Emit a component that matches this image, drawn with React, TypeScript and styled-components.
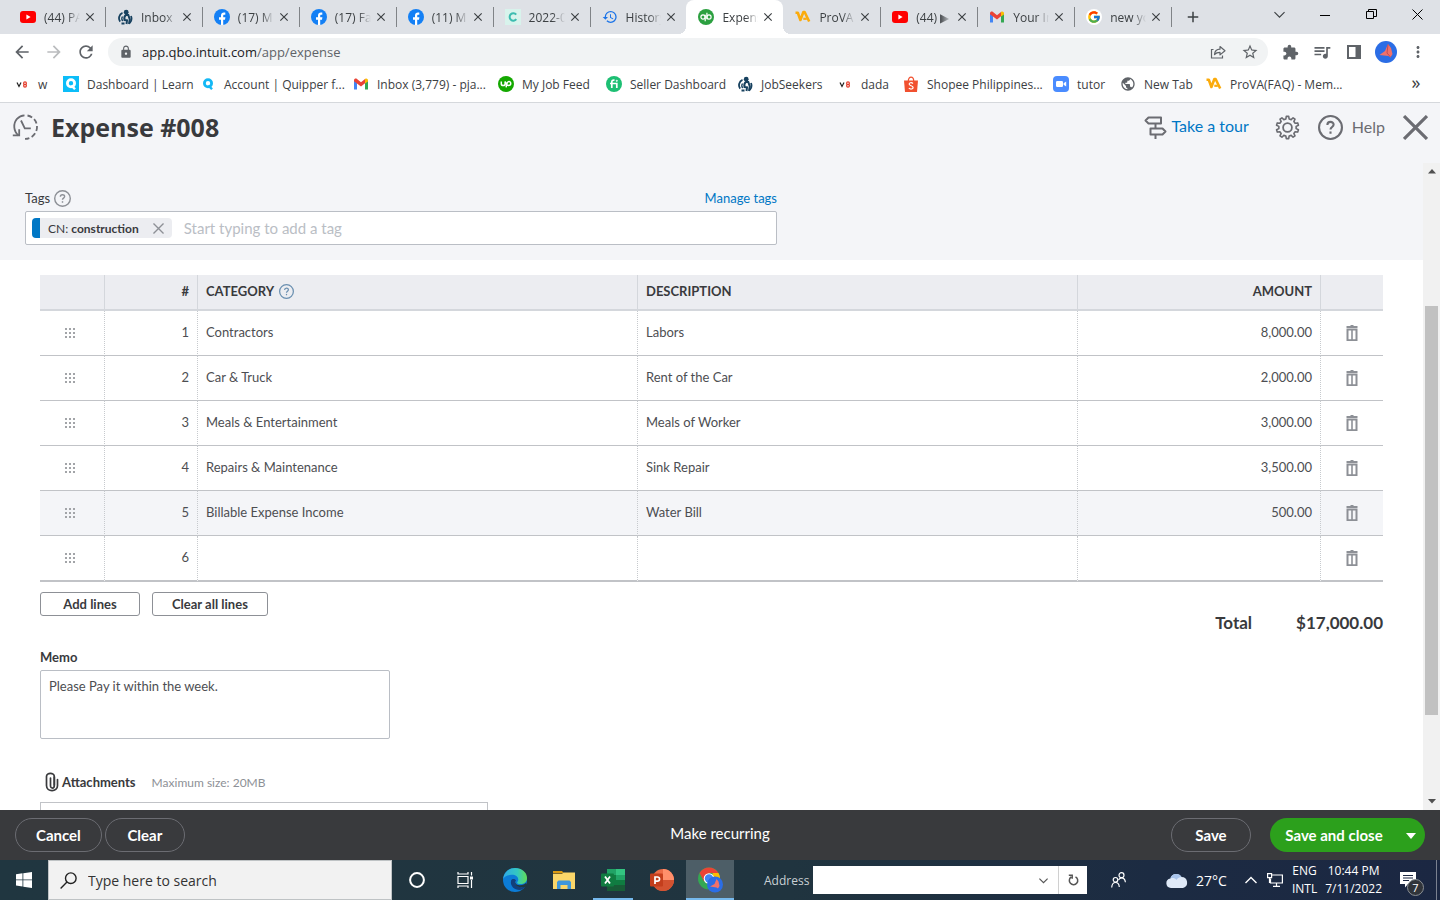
import React from "react";
import styled, { createGlobalStyle, css } from "styled-components";
import {
  MdAdd, MdArrowBack, MdArrowForward, MdClose, MdExtension, MdHistory, MdLock,
  MdMoreVert, MdPublic, MdQueueMusic, MdRefresh, MdStarBorder,
} from "react-icons/md";
import { FcGoogle } from "react-icons/fc";

const uiFont = `"Open Sans", "Noto Sans", sans-serif`;
const appFont = `Lato, "Open Sans", sans-serif`;

const GlobalStyle = createGlobalStyle`
  *, *::before, *::after { box-sizing: border-box; }
  body { margin: 0; background: #fff; }
  button, input, textarea { font: inherit; color: inherit; margin: 0; }
  button { border: 0; padding: 0; background: none; cursor: pointer; }
  a { color: inherit; text-decoration: none; }
  svg { display: block; flex: none; }
`;

const Screen = styled.div`
  display: flex;
  flex-direction: column;
  height: 100vh;
  overflow: hidden;
  font-family: ${uiFont};
  font-size: 12px;
  color: #3c4043;
`;

/* ---------- browser tabs ---------- */

const TabStrip = styled.div`
  display: flex;
  flex: none;
  height: 34px;
  padding-left: 8px;
  background: #dee1e6;
`;
const TabList = styled.div`
  display: flex;
  flex: 0 1 1163px;
  min-width: 0;
`;
const Tab = styled.div<{ $active?: boolean; $divider?: boolean }>`
  position: relative;
  display: flex;
  flex: 1 1 0;
  min-width: 0;
  align-items: center;
  gap: 8px;
  padding: 0 8px 0 12px;
  ${(p) => p.$divider && css`
    &::after {
      content: "";
      position: absolute;
      right: -1px;
      top: 7px;
      width: 1px;
      height: 20px;
      background: #808387;
    }
  `}
  ${(p) => p.$active && css`
    background: #fff;
    border-radius: 8px 8px 0 0;
    &::before, &::after {
      content: "";
      position: absolute;
      bottom: 0;
      width: 8px;
      height: 8px;
    }
    &::before { left: -8px; background: radial-gradient(circle at 0 0, transparent 8px, #fff 8px); }
    &::after { right: -8px; background: radial-gradient(circle at 100% 0, transparent 8px, #fff 8px); }
  `}
`;
const TabTitle = styled.span`
  flex: 1;
  min-width: 0;
  overflow: hidden;
  white-space: nowrap;
  mask-image: linear-gradient(90deg, #000 65%, transparent 100%);
`;
const TabClose = styled.button`
  flex: none;
  margin-left: -5px;
  color: #3c4043;
`;
const NewTab = styled.button`
  display: grid;
  place-items: center;
  width: 28px;
  margin-left: 8px;
  color: #3c4043;
`;
const WindowControls = styled.div`
  display: flex;
  margin-left: auto;
  height: 29px;
`;
const WindowButton = styled.button`
  display: grid;
  place-items: center;
  width: 46px;
`;

/* ---------- toolbar ---------- */

const Toolbar = styled.div`
  display: flex;
  flex: none;
  align-items: center;
  height: 36px;
  padding: 0 6px;
  color: #5f6368;
`;
const ToolButton = styled.button<{ $muted?: boolean }>`
  display: grid;
  place-items: center;
  width: 32px;
  height: 28px;
  color: ${(p) => (p.$muted ? "#babcbe" : "#5f6368")};
`;
const Omnibox = styled.div`
  display: flex;
  flex: 1;
  align-items: center;
  height: 28px;
  margin: 0 6px;
  padding: 0 2px 0 11px;
  border-radius: 14px;
  background: #f1f3f4;
`;
const Url = styled.span`
  flex: 1;
  margin-left: 9px;
  font-size: 13px;
  b { font-weight: 400; color: #202124; }
`;

/* ---------- bookmarks ---------- */

const BookmarkBar = styled.nav`
  display: flex;
  flex: none;
  align-items: center;
  height: 33px;
  padding: 0 12px 4px 14px;
  border-bottom: 1px solid #d5d8dc;
`;
const Bookmark = styled.a<{ $width: number }>`
  display: flex;
  align-items: center;
  flex: 0 1 ${(p) => p.$width}px;
  gap: 8px;
  white-space: nowrap;
`;
const MoreBookmarks = styled.button`
  margin-left: auto;
  padding-bottom: 4px;
  font-size: 18px;
  line-height: 20px;
  width: 24px;
`;

/* ---------- application ---------- */

const AppShell = styled.div`
  display: flex;
  flex: 1;
  flex-direction: column;
  min-height: 0;
  font-family: ${appFont};
  font-size: 13px;
  color: #393a3d;
`;
const AppHeader = styled.header`
  display: flex;
  flex: none;
  align-items: center;
  height: 60px;
  padding: 0 12px 12px;
  background: #f4f5f8;
  color: #6b6c72;
`;
const Title = styled.h1`
  flex: 1;
  margin: 0 0 0 12px;
  font-family: ${uiFont};
  font-size: 25px;
  line-height: 32px;
  font-weight: 700;
  color: #393a3d;
`;
const HeaderLink = styled.a`
  display: flex;
  align-items: center;
  gap: 4px;
  font-size: 16px;
  line-height: 20px;
  color: #0077c5;
`;
const SignIcon = styled.span`
  color: #6b6c72;
`;
const HeaderLabel = styled.span`
  padding-bottom: 2px;
`;
const HeaderButton = styled.button<{ $gap?: number }>`
  display: flex;
  align-items: center;
  gap: 9px;
  margin-left: ${(p) => p.$gap ?? 18}px;
  font-size: 16px;
  color: #6b6c72;
`;
const Body = styled.div`
  display: flex;
  flex: 1;
  min-height: 0;
`;
const Viewport = styled.main`
  flex: 1;
  min-width: 0;
  overflow: hidden;
`;
const Scrollbar = styled.div`
  display: flex;
  flex: none;
  flex-direction: column;
  align-items: center;
  justify-content: space-between;
  width: 17px;
  padding: 6px 2px;
  background: #f1f1f1;
`;
const Thumb = styled.div`
  width: 13px;
  flex: 0 1 409px;
  margin: 48px 0 0;
  background: #c1c1c1;
`;

const TagSection = styled.section`
  padding: 26px 25px 15px;
  background: #f4f5f8;
`;
const TagInner = styled.div`
  max-width: 752px;
`;
const TagHead = styled.div`
  display: flex;
  align-items: center;
  height: 18px;
  gap: 4px;
  margin-bottom: 4px;
  svg { color: #8d9096; }
  a { margin-left: auto; color: #0077c5; }
`;
const TagField = styled.div`
  display: flex;
  align-items: center;
  height: 34px;
  padding: 0 6px;
  border: 1px solid #babec5;
  border-radius: 2px;
  background: #fff;
  input {
    flex: 1;
    min-width: 0;
    margin-left: 12px;
    padding: 0;
    border: 0;
    outline: 0;
    font-size: 15px;
  }
  input::placeholder { color: #babec5; opacity: 1; }
`;
const Chip = styled.span`
  display: flex;
  align-items: center;
  height: 20px;
  padding: 0 8px;
  border-left: 8px solid #0077c5;
  border-radius: 4px;
  background: #ecedf1;
  font-size: 12px;
  white-space: pre;
  b { font-weight: 700; }
  button { margin-left: 14px; color: #8d9096; }
`;

const Lines = styled.section`
  padding: 15px 40px 0;
`;
const Table = styled.table`
  width: 100%;
  table-layout: fixed;
  border-collapse: separate;
  border-spacing: 0;
`;
const HeadCell = styled.th<{ $right?: boolean }>`
  height: 36px;
  padding: 0 8px 2px;
  border-right: 1px solid #d4d7dc;
  border-bottom: 2px solid #d4d7dc;
  background: #ecedf1;
  font-size: 13px;
  font-weight: 700;
  text-align: ${(p) => (p.$right ? "right" : "left")};
  &:last-child { border-right: 0; }
`;
const HeadLabel = styled.span`
  display: flex;
  align-items: center;
  gap: 5px;
  color: #393a3d;
  svg { color: #6a8fb0; }
`;
const Row = styled.tr<{ $hover?: boolean }>`
  background: ${(p) => (p.$hover ? "#f4f5f8" : "#fff")};
  &:last-child td { height: 46px; border-bottom: 2px solid #c1c3c7; }
`;
const Cell = styled.td<{ $right?: boolean; $icon?: boolean }>`
  height: 45px;
  padding: 0 8px ${(p) => (p.$icon ? 0 : 2)}px;
  border-right: 1px dotted #c7cace;
  border-bottom: 1px solid #c1c3c7;
  color: #4d4e52;
  text-align: ${(p) => (p.$right ? "right" : "left")};
  &:last-child { border-right: 0; }
`;
const HandleButton = styled.button`
  display: block;
  margin-left: 17px;
  color: #a2a4a8;
`;
const TrashButton = styled.button`
  display: block;
  margin: 0 auto;
  color: #8d9096;
`;
const Summary = styled.div`
  display: flex;
  align-items: flex-start;
  gap: 12px;
  padding-top: 10px;
`;
const LineButton = styled.button`
  height: 24px;
  padding: 0 19px;
  border: 1px solid #8d9096;
  border-radius: 3px;
  font-weight: 700;
  min-width: 100px;
`;
const Total = styled.p`
  display: flex;
  gap: 44px;
  margin: 19px 0 0 auto;
  font-size: 17px;
  line-height: 24px;
  font-weight: 700;
`;
const MemoLabel = styled.label`
  display: block;
  margin-top: 14px;
  line-height: 16px;
  font-weight: 700;
`;
const Memo = styled.textarea`
  display: block;
  width: 350px;
  height: 69px;
  margin-top: 5px;
  padding: 6px 8px;
  border: 1px solid #babec5;
  border-radius: 2px;
  color: #4d4e52;
  line-height: 18px;
  resize: none;
  outline: 0;
`;
const Attachments = styled.div`
  display: flex;
  align-items: center;
  height: 20px;
  margin-top: 33px;
  padding-left: 5px;
  b { margin: 0 16px 0 3px; }
  span { font-size: 12px; color: #8d9096; }
`;
const DropZone = styled.div`
  max-width: 448px;
  height: 80px;
  margin-top: 10px;
  border: 1px solid #c1c3c7;
`;

const Footer = styled.footer`
  display: grid;
  grid-template-columns: 1fr auto 1fr;
  flex: none;
  align-items: center;
  height: 50px;
  padding: 0 15px;
  background: #393a3d;
  color: #fff;
  font-size: 15px;
`;
const RecurringButton = styled.button`
  padding-bottom: 4px;
`;
const FooterGroup = styled.div<{ $gap: number; $end?: boolean }>`
  display: flex;
  gap: ${(p) => p.$gap}px;
  justify-content: ${(p) => (p.$end ? "flex-end" : "flex-start")};
`;
const Pill = styled.button`
  height: 34px;
  min-width: 80px;
  padding: 0 20px;
  border: 1px solid #6b6c72;
  border-radius: 17px;
  font-weight: 700;
`;
const SaveClose = styled.div`
  display: flex;
  width: 155px;
  height: 34px;
  border-radius: 17px;
  overflow: hidden;
  background: #2ca01c;
  font-weight: 700;
  button:first-child { flex: 1; padding-left: 1px; }
  button:last-child { display: grid; place-items: center; width: 28px; padding-top: 2px; }
`;

/* ---------- taskbar ---------- */

const Taskbar = styled.div`
  display: flex;
  flex: none;
  height: 40px;
  background: linear-gradient(90deg, #203640, #20343f 55%, #1c2b42 80%, #1b2742);
  color: #fff;
`;
const StartButton = styled.button`
  display: grid;
  place-items: center;
  width: 48px;
`;
const Search = styled.label`
  display: flex;
  align-items: center;
  gap: 11px;
  flex: 0 1 344px;
  padding: 0 11px;
  border: 1px solid #bfc3c5;
  background: #f2f2f2;
  color: #222;
  input {
    flex: 1;
    min-width: 0;
    padding: 0;
    border: 0;
    outline: 0;
    background: none;
    font-size: 14px;
  }
  input::placeholder { color: #333; opacity: 1; }
`;
const TaskButton = styled.button<{ $active?: boolean; $running?: boolean }>`
  display: grid;
  place-items: center;
  width: 49px;
  ${(p) => p.$active && css`width: 48px; background: #4d5e67; box-shadow: inset 0 -2px #76b9ed;`}
  ${(p) => p.$running && css`
    background: linear-gradient(#76b9ed, #76b9ed) center bottom / 40px 2px no-repeat;
  `}
`;
const AddressLabel = styled.label`
  display: flex;
  align-items: center;
  gap: 4px;
  margin-left: 30px;
  color: #c9d0d4;
`;
const AddressBox = styled.span`
  display: flex;
  align-items: center;
  width: 274px;
  height: 28px;
  background: #fff;
  color: #555;
  input { flex: 1; min-width: 0; border: 0; outline: 0; background: none; }
  button { display: grid; place-items: center; width: 29px; height: 28px; }
  button:last-child { border-left: 1px solid #d0d0d0; }
`;
const Tray = styled.div`
  display: flex;
  align-items: center;
  margin-left: auto;
  padding-right: 3px;
`;
const TrayButton = styled.button<{ $left: number }>`
  position: relative;
  display: flex;
  align-items: center;
  gap: 8px;
  margin-left: ${(p) => p.$left}px;
  font-size: 14px;
`;
const TrayText = styled.span<{ $left: number }>`
  margin-left: ${(p) => p.$left}px;
  font-size: 12px;
  line-height: 18px;
  text-align: center;
`;
const Count = styled.span`
  position: absolute;
  left: 7px;
  top: 7px;
  width: 17px;
  height: 17px;
  border: 1px solid #8a8f94;
  border-radius: 50%;
  background: #30343a;
  font-size: 11px;
  line-height: 15px;
  text-align: center;
`;
const DesktopEdge = styled.span`
  width: 1px;
  height: 40px;
  margin-left: 20px;
  background: #7a8190;
`;

/* ---------- brand icons ---------- */

const YouTube = () => (
  <svg width="16" height="16" viewBox="0 0 16 16"><rect y="2" width="16" height="12" rx="3" fill="#f00" /><path d="M6.400 5.500v5L10.600 8z" fill="#fff" /></svg>
);
const Facebook = () => (
  <svg width="16" height="16" viewBox="0 0 16 16"><circle cx="8" cy="8" r="8" fill="#1480f5" /><path d="M7 16v-5.300H5V8.300h2V6.600c0-2 1.200-3 2.900-3 .8 0 1.400.1 1.400.1v2h-.9c-1 0-1.200.6-1.200 1.200v1.400h2.200l-.4 2.400H9.200V16z" fill="#fff" /></svg>
);
const Jobs = () => (
  <svg width="16" height="16" viewBox="0 0 16 16" fill="none" stroke="#17415f">
    <circle cx="9.200" cy="3.200" r="2.400" fill="#17415f" stroke="none" />
    <path d="M9.300 5.500c-2 1.500-2.300 3.500-1.800 5.500l2.500.3L9.500 15" strokeWidth="2" />
    <path d="M9 6h2.300l1.500 4.500-.8 4.500" strokeWidth="2" />
    <path d="M5.500 3.800C2 5 1 10 3.200 12.600M4.500 14.500h3M14 7c1 2.500.5 5-1.200 7" strokeWidth="1.800" />
    <path d="M5.500 7.500c-1 1.500-1 3 .2 4.500" strokeWidth="1.300" />
  </svg>
);
const Canva = () => (
  <svg width="16" height="16" viewBox="0 0 16 16"><rect width="16" height="16" fill="#d8f3ec" /><path d="M11.200 5.700A3.700 3.700 0 1 0 11.300 10.200" fill="none" stroke="#3dbcb0" strokeWidth="2" /></svg>
);
const QuickBooks = () => (
  <svg width="16" height="16" viewBox="0 0 16 16" fill="none" stroke="#fff" strokeWidth="1.200"><circle cx="8" cy="8" r="8" fill="#2ca040" stroke="none" /><circle cx="5" cy="8" r="2.100" /><path d="M7.200 5.800v6.400" /><circle cx="11" cy="8" r="2.100" /><path d="M8.900 3.800v6.400" /></svg>
);
const ProVa = () => (
  <svg width="16" height="16" viewBox="0 0 16 16" fill="none" stroke="#fbab0c" strokeWidth="2.600"><path d="M.5 3.800h2.300L5.400 11l3-8 1.200 0 4.600 9.500" strokeLinejoin="round" /><path d="M8.300 9.800h3.500" strokeWidth="2.200" /></svg>
);
const Gmail = () => (
  <svg width="16" height="16" viewBox="0 0 16 16"><path d="M1 4v9.500h3V7z" fill="#4285f4" /><path d="M15 4v9.500h-3V7z" fill="#34a853" /><path d="M1 4.500C1 2.500 3 2 4 3l4 3.200L12 3v4.200L8 10.400 1 5.200z" fill="#ea4335" /><path d="M12 3c1.200-1 3-.4 3 1.500v.9l-3 2.200z" fill="#fbbc04" /></svg>
);
const Google = () => (
  <svg width="16" height="16" viewBox="0 0 16 16"><circle cx="8" cy="8" r="8" fill="#fff" /><FcGoogle x="1" y="1" size={14} /></svg>
);
const V8 = () => (
  <svg width="16" height="16" viewBox="0 0 16 16" fill="none" strokeWidth="1.200"><path d="m3 6.500 2 4 2-4" stroke="#222" /><circle cx="11" cy="7.200" r="1.400" stroke="#e43b2a" /><circle cx="11" cy="9.800" r="1.400" stroke="#e43b2a" /></svg>
);
const Quipper = ({ filled }: { filled?: boolean }) => (
  <svg width="16" height="16" viewBox="0 0 16 16">{filled && <rect width="16" height="16" fill="#0cbdf8" />}<circle cx="8" cy="7.300" r="3.600" fill="none" stroke={filled ? "#fff" : "#14b8f5"} strokeWidth="2.800" /><path d="m8.500 9.500 3.500 3.800" stroke={filled ? "#fff" : "#14b8f5"} strokeWidth="2.400" /></svg>
);
const Upwork = () => (
  <svg width="16" height="16" viewBox="0 0 16 16" fill="none" stroke="#fff" strokeWidth="1.500"><circle cx="8" cy="8" r="8" fill="#14a800" stroke="none" /><path d="M3.300 5.500v2.200c0 2.500 3.800 2.500 3.800 0V5.500c.8 2 1.800 4 3.500 4 2.800 0 2.800-4 .3-4-1.800 0-2.200 1.800-2.800 5.800" /></svg>
);
const Fiverr = () => (
  <svg width="16" height="16" viewBox="0 0 16 16" fill="none" stroke="#fff" strokeWidth="1.700"><circle cx="8" cy="8" r="8" fill="#1dbf73" stroke="none" /><path d="M5.800 12V6.200c0-1.600.8-2.200 2.700-2M4 7.500h6.800V12" /><circle cx="10.800" cy="4.800" r=".6" fill="#fff" strokeWidth=".8" /></svg>
);
const Shopee = () => (
  <svg width="16" height="16" viewBox="0 0 16 16" fill="none" stroke="#f1502f"><path d="M1 4.500h14L14 16H2z" fill="#f1502f" stroke="none" /><path d="M5.300 5c0-5.300 5.400-5.300 5.400 0" strokeWidth="1.200" /><path d="M10 7.500C8.500 6.200 6 6.600 6.200 8.300c.2 1.800 3.900 1.200 3.900 3.200 0 1.800-2.800 2-4.300.6" stroke="#fff" strokeWidth="1.200" /></svg>
);
const Zoom = () => (
  <svg width="16" height="16" viewBox="0 0 16 16"><rect width="16" height="16" rx="4" fill="#4a8cff" /><rect x="3" y="5" width="7" height="6" rx="1.200" fill="#fff" /><path d="m10.600 7.300 2.600-1.800v5l-2.600-1.800z" fill="#fff" /></svg>
);
const Avatar = () => (
  <svg width="22" height="22" viewBox="0 0 22 22"><circle cx="11" cy="11" r="11" fill="#2b6de5" /><path d="M13 3l3 4 1.500 6-2 3.500-2-1.500-9-1 5.500-4z" fill="#f0716a" /><path d="M13 3.500 12 12l3.500 4" fill="none" stroke="#b9414e" strokeWidth=".8" /></svg>
);

/* ---------- interface icons ---------- */

const Share = () => (
  <svg width="16" height="16" viewBox="0 0 16 16" fill="none" stroke="currentColor" strokeWidth="1.200"><path d="M3.500 5.500h-2V14h11v-2.500" /><path d="M4.500 10.500c.3-3.300 2-5.200 5.500-5.300V2.500l5 4.200-5 4.200V8.300c-2.500 0-4 .5-5.500 2.200z" strokeLinejoin="round" /></svg>
);
const SidePanel = () => (
  <svg width="14" height="14" viewBox="0 0 14 14"><rect x="1" y="1" width="12" height="12" fill="none" stroke="currentColor" strokeWidth="2" /><path d="M8.500 1H13v12H8.500z" fill="currentColor" /></svg>
);
const Recent = () => (
  <svg width="27" height="26" viewBox="0 0 27 26" fill="none" stroke="#6b6c72" strokeWidth="1.800"><path d="M6.500 21.500C1.500 17.500.8 9.500 5 4.800 7 2.700 9.500 1.500 12.500 1.300" /><path d="M.8 21.300h6.400v-6" /><path d="M15.500 1.500c5.500 1 9.500 5.500 9.500 11.500 0 7-6 12-12 11.900" strokeDasharray="5 2.600" /><path d="m9 6.500 3.800 7.800h6" /></svg>
);
const Signpost = () => (
  <svg width="23" height="24" viewBox="0 0 23 24" fill="none" stroke="currentColor" strokeWidth="2" strokeLinejoin="round"><path d="M4.500 2.500H17v6H4.500l-3-3zM6.500 13.500h12l3 3-3 3h-12zM11.500 8.500v5M11.500 19.500V24" /></svg>
);
const gearPath = (() => {
  const pts: string[] = [];
  const teeth = 10;
  for (let i = 0; i < teeth; i++) {
    [[-0.3, 8.7], [-0.17, 11.2], [0.17, 11.2], [0.3, 8.7]].forEach(([off, r]) => {
      const a = ((i + off) / teeth) * Math.PI * 2;
      pts.push(`${(12.5 + r * Math.sin(a)).toFixed(2)} ${(12.5 - r * Math.cos(a)).toFixed(2)}`);
    });
  }
  return `M${pts.join("L")}Z`;
})();
const Gear = () => (
  <svg width="25" height="25" viewBox="0 0 25 25" fill="none" stroke="currentColor" strokeWidth="1.600" strokeLinejoin="round"><path d={gearPath} /><circle cx="12.500" cy="12.500" r="4.400" strokeWidth="1.800" /></svg>
);
const Question = ({ size, weight }: { size: number; weight: number }) => (
  <svg width={size} height={size} viewBox="0 0 24 24" fill="none" stroke="currentColor" strokeWidth={weight}><circle cx="12" cy="12" r={12 - weight / 2} /><path d="M9 9.600c0-4 6-3.800 6-.4 0 2.300-3 2.300-3 4.700" /><path d="M12 15.800v2.200" /></svg>
);
const Cross = ({ size, weight }: { size: number; weight: number }) => (
  <svg width={size} height={size} viewBox="0 0 24 24" fill="none" stroke="currentColor" strokeWidth={weight}><path d="m1 1 22 22M23 1 1 23" /></svg>
);
const Grip = () => (
  <svg width="10" height="10" viewBox="0 0 10 10" fill="currentColor">
    {[0, 4, 8].map((y) => [0, 4, 8].map((x) => <rect key={`${x}-${y}`} x={x} y={y} width="2" height="2" />))}
  </svg>
);
const Trash = () => (
  <svg width="12" height="16" viewBox="0 0 12 16" fill="none" stroke="currentColor"><path d="M.5 2h11" strokeWidth="2" /><path d="M4.500.5h3" /><path d="M1.500 4.500h9v10.700h-9z" strokeWidth="2" /><path d="M6 5v10" strokeWidth="1.600" /></svg>
);
const Clip = () => (
  <svg width="14" height="20" viewBox="0 0 14 20" fill="none" stroke="#393a3d" strokeWidth="1.700" strokeLinecap="round"><path d="M9.300 5v8.800c0 3-3.800 3-3.800 0V6" /><path d="M9.300 13V4.500C9.300.2 1.500.2 1.500 4.500v9c0 6.800 11 6.800 11 .3V7.500" /></svg>
);
const ScrollArrow = ({ down }: { down?: boolean }) => (
  <svg width="8" height="5" viewBox="0 0 8 5"><path d={down ? "M0 0h8L4 4.500z" : "M0 4.500h8L4 0z"} fill="#505050" /></svg>
);

/* ---------- taskbar icons ---------- */

const Windows = () => (
  <svg width="16" height="16" viewBox="0 0 16 16" fill="#fff"><path d="M0 2.200 6.500 1.300v6.200H0zM7.300 1.200 16 0v7.500H7.300zM0 8.300h6.500v6.200L0 13.600zM7.300 8.300H16V16l-8.700-1.300z" /></svg>
);
const Magnifier = () => (
  <svg width="17" height="17" viewBox="0 0 17 17" fill="none" stroke="#222" strokeWidth="1.400"><circle cx="10.800" cy="6.200" r="5.300" /><path d="M7 10 .6 16.400" /></svg>
);
const Cortana = () => (
  <svg width="16" height="16" viewBox="0 0 16 16" fill="none" stroke="#fff" strokeWidth="2"><circle cx="8" cy="8" r="6.900" /></svg>
);
const TaskView = () => (
  <svg width="17" height="16" viewBox="0 0 17 16" fill="none" stroke="#fff" strokeWidth="1.200"><path d="M1 4.500h10v7H1zM1 0v2h10V0M1 16v-2h10v2M14.500 0v3.500M14.500 8v8" /><path d="M13 4.500h3v3h-3z" fill="#fff" stroke="none" /></svg>
);
const Edge = () => (
  <svg width="24" height="24" viewBox="0 0 24 24">
    <defs><linearGradient id="edgeTop"><stop offset="0" stopColor="#2fa9e8" /><stop offset=".6" stopColor="#34c8c0" /><stop offset="1" stopColor="#62dc55" /></linearGradient></defs>
    <circle cx="12" cy="12" r="12" fill="#0c7cd6" />
    <path d="M0 11C1 4 6 0 12 0c7 0 12 4.500 12 10 0 4-3 6-6.500 6-3 0-4-1-3-2.200C17 10 13 6.500 8.500 6.800 4 7 1 9 0 11z" fill="url(#edgeTop)" />
    <path d="M8 13c-1 5 3.500 9 8.500 9 2 0 4.500-1.500 6-3.500-3 1.200-8 1.200-10-2-1-1.700-.5-3 .5-4-1.500-2-4.500-2-5 .5z" fill="#123f7c" />
    <path d="M13 12c-1.700 2.500 0 5 3.500 5.200 3 .1 5-.8 6.200-2.200L24 17l-1.500 2c-5 1-10 0-10.500-4z" fill="#203640" />
  </svg>
);
const Explorer = () => (
  <svg width="22" height="18" viewBox="0 0 22 18"><path d="M0 0h9l2 2.500H0z" fill="#dc9a12" /><path d="M0 3h9l1.500-1.500H22V18H0z" fill="#fbd669" /><path d="M4 18v-7l1.500-1.500h11L18 11v7h-3.500v-4h-7v4z" fill="#3f97dc" /></svg>
);
const Excel = () => (
  <svg width="24" height="22" viewBox="0 0 24 22"><path d="M6 0h9v6H6z" fill="#21a366" /><path d="M15 0h9v6h-9z" fill="#33c481" /><path d="M6 6h9v10H6z" fill="#107c41" /><path d="M15 6h9v5h-9z" fill="#21a366" /><path d="M15 11h9v5h-9z" fill="#107c41" /><path d="M6 16h18v6H6z" fill="#185c37" /><rect y="4.500" width="13" height="13" rx="1" fill="#107c41" /><path d="m4 7.500 5 7M9 7.500l-5 7" stroke="#fff" strokeWidth="1.800" /></svg>
);
const PowerPoint = () => (
  <svg width="24" height="22" viewBox="0 0 24 22"><circle cx="13" cy="11" r="11" fill="#ed6c47" /><path d="M13 0a11 11 0 0 1 11 11H13z" fill="#ff8f6b" /><path d="M2 11h22a11 11 0 0 1-22 0z" fill="#d35230" /><rect y="4.500" width="13" height="13" rx="1" fill="#c43e1c" /><path d="M5 15V8h2.300c3 0 3 4.200 0 4.200H5" fill="none" stroke="#fff" strokeWidth="1.700" /></svg>
);
const Chrome = () => (
  <svg width="27" height="26" viewBox="0 0 27 26">
    <circle cx="12" cy="11.500" r="11" fill="#34a853" /><path d="M2.500 6A11 11 0 0 1 21.500 6H12l-5 8.500z" fill="#ea4335" /><path d="M21.500 6A11 11 0 0 1 12 22.500l5-8.500-1.500-8z" fill="#fbbc04" /><circle cx="12" cy="11.500" r="5.300" fill="#fff" /><circle cx="12" cy="11.500" r="4.200" fill="#4285f4" />
    <circle cx="18" cy="17.500" r="8" fill="#2b6de5" /><path d="m19.500 12 2 2.500 1 4.500-1.500 2.500-1.500-1-6.500-1 4.500-2.500z" fill="#f0716a" />
  </svg>
);
const People = () => (
  <svg width="15" height="16" viewBox="0 0 15 16" fill="none" stroke="#fff" strokeWidth="1.200"><circle cx="4.500" cy="7.800" r="2.300" /><path d="M.7 15.500c.2-3 1.600-5 3.800-5s3.600 1.700 3.800 4.500" /><circle cx="10.500" cy="3.200" r="2.500" /><path d="M7.500 8c.8-1.500 1.800-2.200 3-2.200 2 0 3.600 1.500 3.900 4.500" /></svg>
);
const Cloud = () => (
  <svg width="22" height="15" viewBox="0 0 22 15"><path d="M5 15a5 4.800 0 0 1-.6-9.500A6 5.800 0 0 1 15.500 4 5.600 5.600 0 0 1 17 15z" fill="#dfe9f7" /><path d="M4.400 5.500A6 5.800 0 0 1 15.500 4C12 4 10.500 7 10.500 7c-1.500-2-4-2.500-6.100-1.500z" fill="#a9c5ec" /></svg>
);
const Network = () => (
  <svg width="16" height="14" viewBox="0 0 16 14" fill="none" stroke="#fff" strokeWidth="1.200"><path d="M5 2h10.400v8H3.500V5.500M9.500 10v3M6 13.300h7" /><path d="M.6.600h4v4h-4zM2.500 5v5" /></svg>
);
const Notice = () => (
  <svg width="16" height="16" viewBox="0 0 16 16"><path d="M0 0h16v12H8l-3 3.500V12H0z" fill="#fff" /><path d="M3 3.500h10M3 6h10M3 8.500h6" stroke="#1b2742" strokeWidth="1.100" /></svg>
);
const ReloadSmall = () => (
  <svg width="11" height="12" viewBox="0 0 11 12" fill="none" stroke="currentColor" strokeWidth="1.500"><path d="M7.500 2.800a4.200 4.200 0 1 1-4.300.2M.8 1.300h3.400v3.400" /></svg>
);
const Chevron = ({ up, size = 12, weight = 1.4 }: { up?: boolean; size?: number; weight?: number }) => (
  <svg width={size} height={size} viewBox="0 0 12 12" fill="none" stroke="currentColor" strokeWidth={weight}><path d={up ? "m.5 9 5.500-5.500L11.500 9" : "m.5 3.500 5.500 5.500 5.500-5.500"} /></svg>
);

/* ---------- data ---------- */

const tabs = [
  { title: "(44) PA", icon: <YouTube />, divider: true },
  { title: "Inbox", icon: <Jobs />, divider: true },
  { title: "(17) M", icon: <Facebook />, divider: true },
  { title: "(17) Fa", icon: <Facebook />, divider: true },
  { title: "(11) M", icon: <Facebook />, divider: true },
  { title: "2022-0", icon: <Canva />, divider: true },
  { title: "History", icon: <MdHistory size={16} color="#1a73e8" /> },
  { title: "Expens", icon: <QuickBooks />, active: true },
  { title: "ProVA", icon: <ProVa />, divider: true },
  { title: "(44) ▶", icon: <YouTube />, divider: true },
  { title: "Your In", icon: <Gmail />, divider: true },
  { title: "new yo", icon: <Google />, divider: true },
];

const bookmarks = [
  { label: "w", icon: <V8 />, width: 49 },
  { label: "Dashboard | Learn", icon: <Quipper filled />, width: 137 },
  { label: "Account | Quipper f...", icon: <Quipper />, width: 153 },
  { label: "Inbox (3,779) - pja...", icon: <Gmail />, width: 145 },
  { label: "My Job Feed", icon: <Upwork />, width: 108 },
  { label: "Seller Dashboard", icon: <Fiverr />, width: 131 },
  { label: "JobSeekers", icon: <Jobs />, width: 100 },
  { label: "dada", icon: <V8 />, width: 66 },
  { label: "Shopee Philippines...", icon: <Shopee />, width: 150 },
  { label: "tutor", icon: <Zoom />, width: 67 },
  { label: "New Tab", icon: <MdPublic size={16} color="#5f6368" />, width: 86 },
  { label: "ProVA(FAQ) - Mem...", icon: <ProVa />, width: 140 },
];

const lines = [
  { category: "Contractors", description: "Labors", amount: "8,000.00" },
  { category: "Car & Truck", description: "Rent of the Car", amount: "2,000.00" },
  { category: "Meals & Entertainment", description: "Meals of Worker", amount: "3,000.00" },
  { category: "Repairs & Maintenance", description: "Sink Repair", amount: "3,500.00" },
  { category: "Billable Expense Income", description: "Water Bill", amount: "500.00" },
  { category: "", description: "", amount: "" },
];

function BrowserChrome() {
  return (
    <>
      <TabStrip>
        <TabList role="tablist">
          {tabs.map((t, i) => (
            <Tab key={i} role="tab" aria-selected={!!t.active} $active={t.active} $divider={t.divider}>
              {t.icon}
              <TabTitle>{t.title}</TabTitle>
              <TabClose aria-label="Close tab"><MdClose size={14} /></TabClose>
            </Tab>
          ))}
        </TabList>
        <NewTab aria-label="New tab"><MdAdd size={18} /></NewTab>
        <WindowControls>
          <WindowButton aria-label="Search tabs"><Chevron size={11} weight={1.2} /></WindowButton>
          <WindowButton aria-label="Minimize"><svg width="10" height="10"><path d="M0 5.500h10" stroke="#000" /></svg></WindowButton>
          <WindowButton aria-label="Restore"><svg width="11" height="11" fill="none" stroke="#000"><path d="M.5 2.500h7v7h-7zM2.500 2.500v-2h8v7h-3" /></svg></WindowButton>
          <WindowButton aria-label="Close"><svg width="11" height="11" stroke="#000"><path d="m.5.5 10 10M10.500.5l-10 10" /></svg></WindowButton>
        </WindowControls>
      </TabStrip>
      <Toolbar>
        <ToolButton aria-label="Back"><MdArrowBack size={20} /></ToolButton>
        <ToolButton aria-label="Forward" $muted><MdArrowForward size={20} /></ToolButton>
        <ToolButton aria-label="Reload"><MdRefresh size={20} /></ToolButton>
        <Omnibox>
          <MdLock size={14} />
          <Url><b>app.qbo.intuit.com</b>/app/expense</Url>
          <ToolButton aria-label="Share"><Share /></ToolButton>
          <ToolButton aria-label="Bookmark"><MdStarBorder size={18} /></ToolButton>
        </Omnibox>
        <ToolButton aria-label="Extensions"><MdExtension size={17} /></ToolButton>
        <ToolButton aria-label="Media"><MdQueueMusic size={20} /></ToolButton>
        <ToolButton aria-label="Side panel"><SidePanel /></ToolButton>
        <ToolButton aria-label="Profile"><Avatar /></ToolButton>
        <ToolButton aria-label="Menu"><MdMoreVert size={18} /></ToolButton>
      </Toolbar>
      <BookmarkBar>
        {bookmarks.map((b) => (
          <Bookmark key={b.label} href="#" $width={b.width}>{b.icon}<span>{b.label}</span></Bookmark>
        ))}
        <MoreBookmarks aria-label="More bookmarks">»</MoreBookmarks>
      </BookmarkBar>
    </>
  );
}

function LineTable() {
  return (
    <Table>
      <colgroup>
        <col width={65} /><col width={93} /><col /><col />
        <col width={243} /><col width={62} />
      </colgroup>
      <thead>
        <tr>
          <HeadCell />
          <HeadCell $right>#</HeadCell>
          <HeadCell><HeadLabel>CATEGORY <Question size={15} weight={2} /></HeadLabel></HeadCell>
          <HeadCell>DESCRIPTION</HeadCell>
          <HeadCell $right>AMOUNT</HeadCell>
          <HeadCell />
        </tr>
      </thead>
      <tbody>
        {lines.map((l, i) => (
          <Row key={i} $hover={i === 4}>
            <Cell $icon><HandleButton aria-label="Reorder line"><Grip /></HandleButton></Cell>
            <Cell $right>{i + 1}</Cell>
            <Cell>{l.category}</Cell>
            <Cell>{l.description}</Cell>
            <Cell $right>{l.amount}</Cell>
            <Cell $icon><TrashButton aria-label="Delete line"><Trash /></TrashButton></Cell>
          </Row>
        ))}
      </tbody>
    </Table>
  );
}

function ExpenseApp() {
  return (
    <AppShell>
      <AppHeader>
        <Recent />
        <Title>Expense #008</Title>
        <HeaderLink href="#"><SignIcon><Signpost /></SignIcon><HeaderLabel>Take a tour</HeaderLabel></HeaderLink>
        <HeaderButton aria-label="Settings" $gap={26}><Gear /></HeaderButton>
        <HeaderButton><Question size={25} weight={2} /><HeaderLabel>Help</HeaderLabel></HeaderButton>
        <HeaderButton aria-label="Close"><Cross size={25} weight={3} /></HeaderButton>
      </AppHeader>
      <Body>
        <Viewport>
          <TagSection>
            <TagInner>
              <TagHead>
                <label htmlFor="tags">Tags</label>
                <Question size={17} weight={2} />
                <a href="#">Manage tags</a>
              </TagHead>
              <TagField>
                <Chip>CN: <b>construction</b><button aria-label="Remove tag"><Cross size={11} weight={3} /></button></Chip>
                <input id="tags" placeholder="Start typing to add a tag" />
              </TagField>
            </TagInner>
          </TagSection>
          <Lines>
            <LineTable />
            <Summary>
              <LineButton>Add lines</LineButton>
              <LineButton>Clear all lines</LineButton>
              <Total><span>Total</span><span>$17,000.00</span></Total>
            </Summary>
            <MemoLabel htmlFor="memo">Memo</MemoLabel>
            <Memo id="memo" defaultValue="Please Pay it within the week." />
            <Attachments><Clip /><b>Attachments</b><span>Maximum size: 20MB</span></Attachments>
            <DropZone />
          </Lines>
        </Viewport>
        <Scrollbar><ScrollArrow /><Thumb /><ScrollArrow down /></Scrollbar>
      </Body>
      <Footer>
        <FooterGroup $gap={3}><Pill>Cancel</Pill><Pill>Clear</Pill></FooterGroup>
        <RecurringButton>Make recurring</RecurringButton>
        <FooterGroup $gap={19} $end>
          <Pill>Save</Pill>
          <SaveClose>
            <button>Save and close</button>
            <button aria-label="More save options"><svg width="10" height="6"><path d="M0 0h10L5 6z" fill="#fff" /></svg></button>
          </SaveClose>
        </FooterGroup>
      </Footer>
    </AppShell>
  );
}

function WindowsTaskbar() {
  return (
    <Taskbar>
      <StartButton aria-label="Start"><Windows /></StartButton>
      <Search><Magnifier /><input aria-label="Search" placeholder="Type here to search" /></Search>
      <TaskButton aria-label="Cortana"><Cortana /></TaskButton>
      <TaskButton aria-label="Task view"><TaskView /></TaskButton>
      <TaskButton aria-label="Edge"><Edge /></TaskButton>
      <TaskButton aria-label="File Explorer"><Explorer /></TaskButton>
      <TaskButton aria-label="Excel" $running><Excel /></TaskButton>
      <TaskButton aria-label="PowerPoint"><PowerPoint /></TaskButton>
      <TaskButton aria-label="Chrome" $active><Chrome /></TaskButton>
      <AddressLabel>
        Address
        <AddressBox>
          <input />
          <button aria-label="Show addresses"><Chevron size={9} weight={1.6} /></button>
          <button aria-label="Refresh"><ReloadSmall /></button>
        </AddressBox>
      </AddressLabel>
      <Tray>
        <TrayButton aria-label="People" $left={0}><People /></TrayButton>
        <TrayButton $left={40}><Cloud />27°C</TrayButton>
        <TrayButton aria-label="Hidden icons" $left={18}><Chevron up /></TrayButton>
        <TrayButton aria-label="Network" $left={10}><Network /></TrayButton>
        <TrayText $left={9}>ENG<br />INTL</TrayText>
        <TrayText $left={8}>10:44 PM<br />7/11/2022</TrayText>
        <TrayButton aria-label="Notifications" $left={18}><Notice /><Count>7</Count></TrayButton>
        <DesktopEdge />
      </Tray>
    </Taskbar>
  );
}

export default function App() {
  return (
    <Screen>
      <GlobalStyle />
      <BrowserChrome />
      <ExpenseApp />
      <WindowsTaskbar />
    </Screen>
  );
}
